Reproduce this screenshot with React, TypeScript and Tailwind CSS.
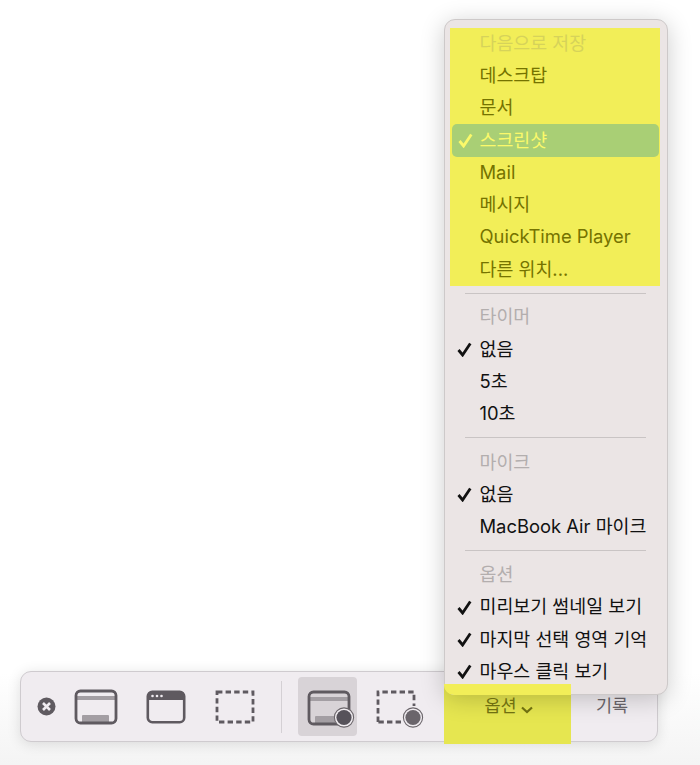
import React from 'react';

const Check = ({ color = '#111' }: { color?: string }) => (
  <svg width="15" height="15" viewBox="0 0 15 15" fill="none">
    <path d="M1.5 8 L5.6 13 L13.3 1.5" stroke={color} strokeWidth="2.8" />
  </svg>
);

const Row = ({
  label,
  checked,
  muted,
  className = '',
}: {
  label: string;
  checked?: boolean;
  muted?: boolean;
  className?: string;
}) => (
  <div className={`flex h-[32.3px] items-center ${muted ? 'text-[#b3aeae]' : ''} ${className}`}>
    <span className="flex w-[29.5px] justify-center">{checked && <Check />}</span>
    <span>{label}</span>
  </div>
);

const Separator = ({ className = '' }: { className?: string }) => (
  <div className={`ml-[20px] mr-[21px] h-[1px] bg-[#c9c4c4] ${className}`} />
);

const stroke = '#5f5a60';

const FullScreenIcon = () => (
  <svg width="44" height="36" viewBox="0 0 44 36" fill="none">
    <rect x="3" y="7" width="38" height="4" fill="#a39ea3" />
    <rect x="8" y="26" width="27" height="8" rx="1" fill="#a39ea3" />
    <rect x="2" y="2" width="40" height="32" rx="4.5" stroke={stroke} strokeWidth="2.8" fill="none" />
  </svg>
);

const WindowIcon = () => (
  <svg width="40" height="34" viewBox="0 0 40 34" fill="none">
    <rect x="1.8" y="1.8" width="36.4" height="30.4" rx="4.5" stroke={stroke} strokeWidth="2.6" />
    <path d="M2 10 V5 a3 3 0 0 1 3-3 H35 a3 3 0 0 1 3 3 V10 Z" fill={stroke} />
    <circle cx="6.5" cy="6" r="1.3" fill="#f0ecf0" />
    <circle cx="11" cy="6" r="1.3" fill="#f0ecf0" />
    <circle cx="15.5" cy="6" r="1.3" fill="#f0ecf0" />
  </svg>
);

const SelectionIcon = () => (
  <svg width="40" height="34" viewBox="0 0 40 34" fill="none">
    <rect x="2" y="2" width="36" height="30" stroke={stroke} strokeWidth="2.8" strokeDasharray="5.4 3.2" />
  </svg>
);

const RecordDot = ({ ring, fill }: { ring: string; fill: string }) => (
  <>
    <circle cx="37" cy="27.5" r="9.6" fill={ring} stroke="#6b666b" strokeWidth="1.1" />
    <circle cx="37" cy="27.5" r="7.6" fill={fill} />
  </>
);

const RecordScreenIcon = () => (
  <svg width="48" height="38" viewBox="0 0 48 38" fill="none">
    <rect x="3" y="7" width="38" height="4" fill="#a39ea3" />
    <rect x="8" y="26" width="20" height="8" rx="1" fill="#a39ea3" />
    <rect x="2" y="2" width="40" height="32" rx="4.5" stroke={stroke} strokeWidth="2.8" />
    <RecordDot ring="#f0ecf0" fill="#56525a" />
  </svg>
);

const RecordSelectionIcon = () => (
  <svg width="48" height="38" viewBox="0 0 48 38" fill="none">
    <path d="M2 32 V2 H38 V16 M25 32 H2" stroke={stroke} strokeWidth="2.8" strokeDasharray="5.4 3.2" />
    <RecordDot ring="#f0ecf0" fill="#6a656b" />
  </svg>
);

export default function App() {
  return (
    <div
      className="relative flex h-[765px] w-[700px] flex-col justify-end overflow-hidden bg-gradient-to-b from-white from-[88%] to-[#f4f4f4] pb-[23px] pl-[20px] text-[18.4px] text-[#111]"
      style={{ fontFamily: '"Inter", "Noto Sans CJK KR", sans-serif' }}
    >
      {/* Toolbar */}
      <div className="flex h-[71px] w-[638px] items-center rounded-[11px] border border-[#cfcbcf] bg-[#f0ecf0] shadow-[0_2px_14px_rgba(0,0,0,0.12)]">
        <div className="ml-[16px] flex h-[19px] w-[19px] items-center justify-center">
          <svg width="19" height="19" viewBox="0 0 19 19">
            <circle cx="9.5" cy="9.5" r="9" fill={stroke} />
            <path d="M6 6 L13 13 M13 6 L6 13" stroke="#f0ecf0" strokeWidth="2.6" />
          </svg>
        </div>
        <div className="ml-[18px] flex">
          <FullScreenIcon />
        </div>
        <div className="ml-[28px] flex">
          <WindowIcon />
        </div>
        <div className="ml-[29px] flex">
          <SelectionIcon />
        </div>
        <div className="ml-[26px] h-[52px] w-[1px] bg-[#d4d0d4]" />
        <div className="ml-[16px] flex h-[59px] w-[59px] items-center justify-center rounded-[4px] bg-[#d8d3d7]">
          <span className="ml-[6px] mt-[4px] flex">
            <RecordScreenIcon />
          </span>
        </div>
        <div className="ml-[19px] mt-[4px] flex">
          <RecordSelectionIcon />
        </div>
        <div className="relative z-10 ml-[20px] flex w-[127px] items-center justify-center pl-[3px] text-[17.5px] text-[#6f6f10]">
          <span>옵션</span>
          <svg className="ml-[3px] mt-[6px]" width="14" height="8" viewBox="0 0 14 8" fill="none">
            <path d="M2 1.5 L7 6 L12 1.5" stroke="#6f6f10" strokeWidth="2.2" />
          </svg>
        </div>
        <div className="ml-[25px] text-[17.5px] text-[#6b666b]">기록</div>
      </div>

      {/* Highlighter over the options button */}
      <div className="absolute left-[444px] top-[684px] h-[60px] w-[127px] bg-[#e6e650]" />

      {/* Dropdown menu */}
      <div className="absolute left-[444px] top-[19px] h-[676px] w-[224px] rounded-[11px] border border-[#cdc9c9] bg-[#ebe5e5] pt-[8px] shadow-[0_4px_24px_rgba(0,0,0,0.2)]">
        <div className="ml-[5px] mr-[7px] flex h-[258px] flex-col bg-[#f2ee58] text-[#757300]">
          <div className="-mt-[0.7px]">
            <Row label="다음으로 저장" className="text-[#d6d35a]" />
            <Row label="데스크탑" />
            <Row label="문서" />
            <div className="ml-[2px] mr-[1px] flex h-[32.3px] items-center rounded-[5px] bg-[#a9cf75] text-[#fbf96a]">
              <span className="flex w-[27.5px] justify-center">
                <Check color="#fbf96a" />
              </span>
              <span>스크린샷</span>
            </div>
            <Row label="Mail" />
            <Row label="메시지" />
            <Row label="QuickTime Player" />
            <Row label="다른 위치..." />
          </div>
        </div>
        <Separator className="mt-[7px]" />
        <div className="mx-[5px] mt-[7px]">
          <Row label="타이머" muted />
          <Row label="없음" checked />
          <Row label="5초" />
          <Row label="10초" />
        </div>
        <Separator className="mt-[7px]" />
        <div className="mx-[5px] mt-[8px]">
          <Row label="마이크" muted />
          <Row label="없음" checked />
          <Row label="MacBook Air 마이크" />
        </div>
        <Separator className="mt-[7px]" />
        <div className="mx-[5px] mt-[7.6px]">
          <Row label="옵션" muted />
          <Row label="미리보기 썸네일 보기" checked />
          <Row label="마지막 선택 영역 기억" checked />
          <Row label="마우스 클릭 보기" checked />
        </div>
      </div>

      {/* Highlighter strip where it crosses the menu */}
      <div className="absolute left-[444px] top-[684px] h-[11px] w-[127px] rounded-bl-[10px] bg-[#f2ee58]" />
    </div>
  );
}
